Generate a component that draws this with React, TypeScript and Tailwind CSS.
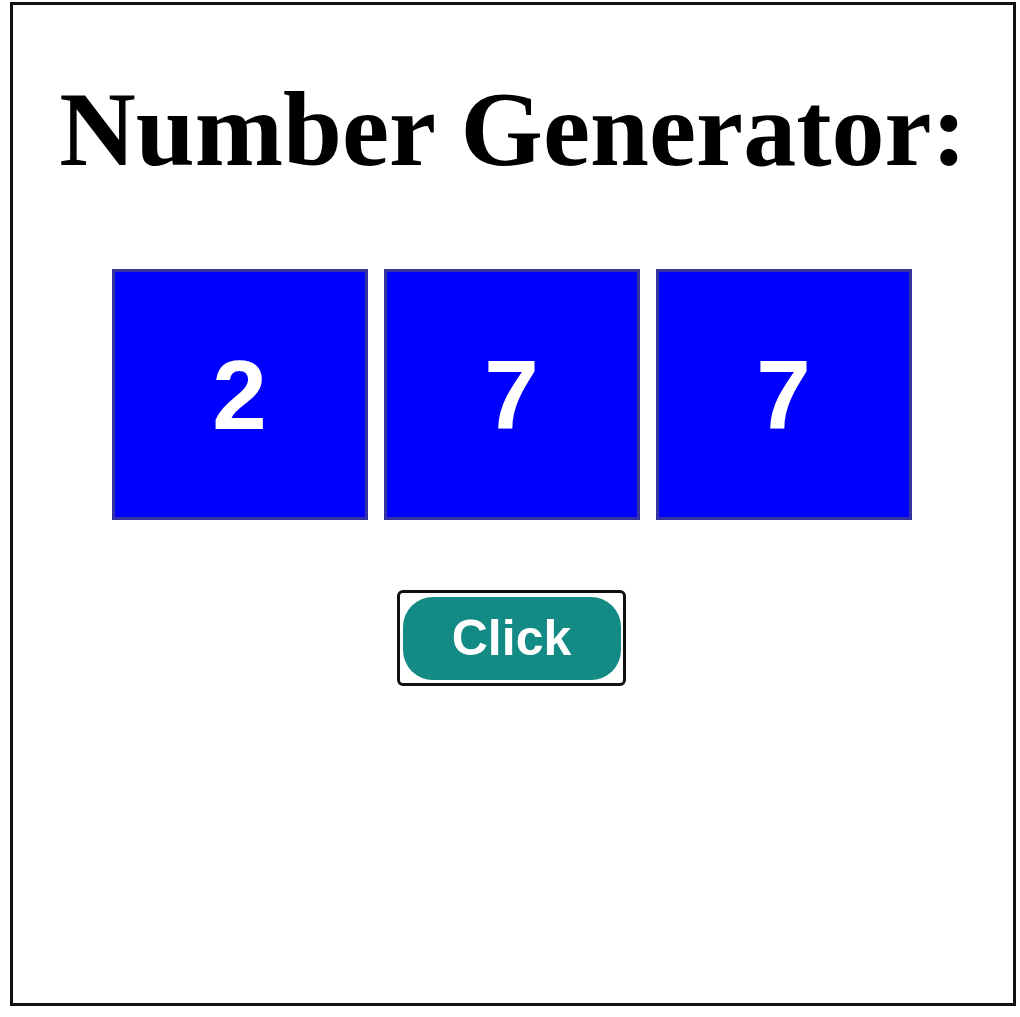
import { useState } from "react";

// three digit slots plus a button that rolls new ones
export default function App() {
  const [nums, setNums] = useState([2, 7, 7]);

  function roll() {
    setNums([0, 1, 2].map(() => Math.floor(Math.random() * 10)));
  }

  return (
    <div className="min-h-[1017px] bg-white pl-[10px] pt-[2px]">
      <div className="flex h-[1004px] w-[1006px] flex-col items-center border-[3px] border-[#111]">
        <h1
          className="mt-[72px] text-[106px] font-bold leading-[106px] text-black"
          style={{ fontFamily: '"Liberation Serif", "Times New Roman", serif' }}
        >
          Number Generator:
        </h1>

        <div className="mt-[86px] flex gap-[16px] pr-[3px]">
          {nums.map((n, i) => (
            <div
              key={i}
              className="flex h-[251px] w-[256px] items-center justify-center border-[3px] border-[#35359f] bg-[#0000ff]"
            >
              <span
                className="text-[98px] font-bold leading-none text-white"
                style={{ fontFamily: '"Liberation Sans", Arial, sans-serif' }}
              >
                {n}
              </span>
            </div>
          ))}
        </div>

        <button
          onClick={roll}
          className="mt-[70px] mr-[4px] flex h-[96px] w-[229px] rounded-[6px] border-[3px] border-[#111] bg-white p-[3px] pt-[4px] pr-[2px]"
        >
          <span
            className="flex h-full w-full items-center justify-center rounded-[30px] bg-[#138a84] text-[50px] font-bold text-white"
            style={{ fontFamily: '"Liberation Sans", Arial, sans-serif' }}
          >
            Click
          </span>
        </button>
      </div>
    </div>
  );
}
